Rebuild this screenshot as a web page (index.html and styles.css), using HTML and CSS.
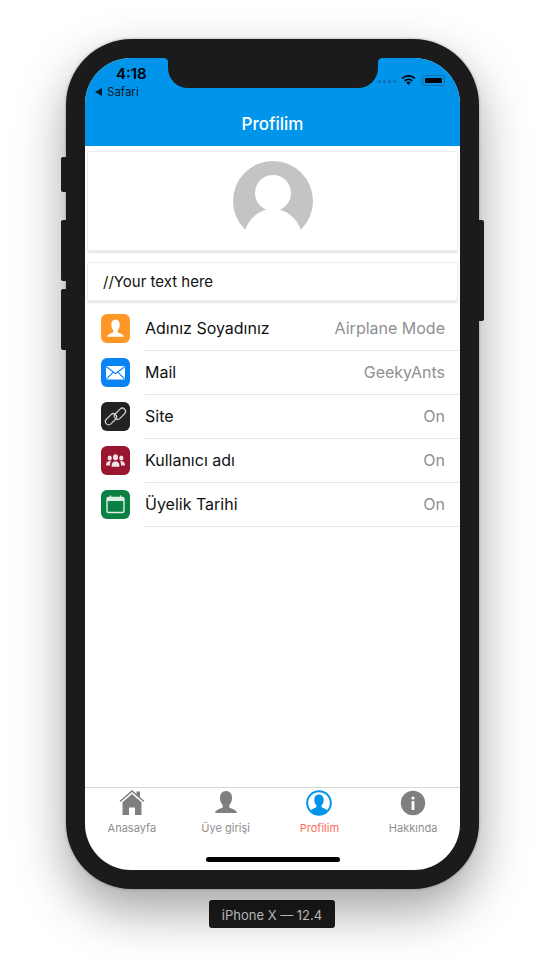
FILE: index.html
```html
<!DOCTYPE html>
<html lang="tr">
<head>
    <meta charset="UTF-8">
    <meta name="viewport" content="width=device-width, initial-scale=1.0">
    <title>Profilim</title>
    <link rel="stylesheet" href="styles.css">
</head>
<body>
    <div class="phone">
        <span class="side-btn side-mute"></span>
        <span class="side-btn side-up"></span>
        <span class="side-btn side-down"></span>
        <span class="side-btn side-power"></span>
        <div class="screen">
            <div class="notch"></div>
            <header class="top">
                <div class="status">
                    <div class="status-left">
                        <div class="time">4:18</div>
                        <div class="back"><span class="back-arrow"></span>Safari</div>
                    </div>
                    <div class="status-right">
                        <span class="dots"><i></i><i></i><i></i><i></i></span>
                        <svg class="wifi" width="15" height="12" viewBox="0 0 15 12">
                            <path d="M.6 3.7a10 10 0 0 1 13.8 0l-1.2 1.3a8.2 8.2 0 0 0-11.4 0z"/>
                            <path d="M3 6.2a6.6 6.6 0 0 1 9 0l-1.2 1.3a4.8 4.8 0 0 0-6.6 0z"/>
                            <path d="M5.3 8.6a3.2 3.2 0 0 1 4.4 0l-2.2 2.5z"/>
                        </svg>
                        <span class="battery"><span class="battery-fill"></span></span>
                    </div>
                </div>
                <h1 class="title">Profilim</h1>
            </header>

            <main class="content">
                <section class="card card-avatar">
                    <svg class="avatar" width="80" height="80" viewBox="0 0 80 80">
                        <circle cx="40" cy="40" r="40" fill="#c4c4c4"/>
                        <circle cx="40" cy="32" r="18" fill="#fff"/>
                        <path d="M12 69C17 56 27 48 40 48s23 8 28 21a40 40 0 0 1-6 11H18a40 40 0 0 1-6-11z" fill="#fff"/>
                    </svg>
                </section>
                <section class="card card-text">//Your text here</section>

                <ul class="list">
                    <li class="row">
                        <span class="ico ico-orange">
                            <svg width="29" height="29" viewBox="0 0 29 29"><path fill="#fff" d="M14.500 5.500c2.800 0 4.200 2.200 4.200 5.200 0 2.300-.9 4.300-2 5.500v2c1 .9 5.500 1.500 6.300 4.500H6c.8-3 5.300-3.600 6.300-4.500v-2c-1.100-1.200-2-3.200-2-5.500 0-3 1.400-5.200 4.200-5.200z"/></svg>
                        </span>
                        <div class="row-body"><span class="row-label">Adınız Soyadınız</span><span class="row-value">Airplane Mode</span></div>
                    </li>
                    <li class="row">
                        <span class="ico ico-blue">
                            <svg width="29" height="29" viewBox="0 0 29 29"><rect x="5" y="8" width="19" height="13.500" rx="1.500" fill="#fff"/><path d="M5.500 8.800l9 7 9-7M5.500 20.800l6.500-6.500M23.500 20.800L17 14.300" fill="none" stroke="#0a84f5" stroke-width="1.100"/></svg>
                        </span>
                        <div class="row-body"><span class="row-label">Mail</span><span class="row-value">GeekyAnts</span></div>
                    </li>
                    <li class="row">
                        <span class="ico ico-dark">
                            <svg width="29" height="29" viewBox="0 0 29 29" fill="none" stroke="#cfcfcf" stroke-width="1.200"><rect x="3.500" y="14" width="13" height="6.500" rx="3.250" transform="rotate(-45 10 17.250)"/><rect x="12.500" y="8.500" width="13" height="6.500" rx="3.250" transform="rotate(-45 19 11.750)"/></svg>
                        </span>
                        <div class="row-body"><span class="row-label">Site</span><span class="row-value">On</span></div>
                    </li>
                    <li class="row">
                        <span class="ico ico-red">
                            <svg width="29" height="29" viewBox="0 0 29 29" fill="#f3e4e7"><ellipse cx="14.500" cy="11.300" rx="2.500" ry="3"/><path d="M10.500 20.800c0-3.500 1.300-4.900 2.700-5.200h2.600c1.400.3 2.700 1.700 2.700 5.200z"/><ellipse cx="8.700" cy="12" rx="2.100" ry="2.600"/><path d="M5 19.500c0-2.800 1.200-4 2.500-4.300h2.600c-.8 1-1.100 2.400-1.200 4.300z"/><ellipse cx="20.300" cy="12" rx="2.100" ry="2.600"/><path d="M24 19.500c0-2.800-1.200-4-2.500-4.300h-2.600c.8 1 1.100 2.400 1.200 4.300z"/></svg>
                        </span>
                        <div class="row-body"><span class="row-label">Kullanıcı adı</span><span class="row-value">On</span></div>
                    </li>
                    <li class="row">
                        <span class="ico ico-green">
                            <svg width="29" height="29" viewBox="0 0 29 29"><rect x="6" y="7.500" width="17" height="15" rx="1.500" fill="none" stroke="#dcefe4" stroke-width="1.400"/><rect x="6" y="7.500" width="17" height="3.500" fill="#dcefe4"/><path d="M9.500 5.500v2.500M19.500 5.500v2.500" stroke="#dcefe4" stroke-width="1.400"/></svg>
                        </span>
                        <div class="row-body"><span class="row-label">Üyelik Tarihi</span><span class="row-value">On</span></div>
                    </li>
                </ul>
            </main>

            <nav class="tabs">
                <a class="tab">
                    <svg width="26" height="26" viewBox="0 0 26 26" fill="#7f7f7f"><path d="M13 0L.500 11l.9 1L13 2 24.600 12l.9-1-4.500-4V1.500h-3.500V4z"/><path d="M13 4L3.500 12.200V25H10v-7.500h6V25h6.500V12.200z"/></svg>
                    <span>Anasayfa</span>
                </a>
                <a class="tab">
                    <svg width="26" height="26" viewBox="0 0 26 26" fill="#7f7f7f"><path d="M13 1c4 0 6 3 6 7 0 3-1.200 5.500-2.700 7v2.500c1.300 1 7 2 7.700 5.500H2c.7-3.500 6.400-4.500 7.700-5.500V15C8.200 13.500 7 11 7 8c0-4 2-7 6-7z"/></svg>
                    <span>Üye girişi</span>
                </a>
                <a class="tab tab-active">
                    <svg width="26" height="26" viewBox="0 0 26 26"><circle cx="13" cy="13" r="11.800" fill="#fff" stroke="#0094ea" stroke-width="2"/><path fill="#0094ea" d="M13 4.500c3 0 4.700 2.300 4.700 5.300 0 2.300-.9 4.300-2.100 5.500v1.900c1 .8 4.500 1.400 5.900 3.400a10.800 10.800 0 0 1-17 0c1.400-2 4.900-2.600 5.900-3.400v-1.900c-1.200-1.200-2.100-3.200-2.100-5.500 0-3 1.700-5.300 4.700-5.300z"/></svg>
                    <span>Profilim</span>
                </a>
                <a class="tab">
                    <svg width="26" height="26" viewBox="0 0 26 26"><circle cx="13" cy="13" r="12.200" fill="#7f7f7f"/><circle cx="13" cy="8" r="1.600" fill="#fff"/><rect x="11.600" y="11" width="2.800" height="9" fill="#fff"/></svg>
                    <span>Hakkında</span>
                </a>
            </nav>
            <div class="home-bar"><span></span></div>
        </div>
    </div>
    <div class="device-label">iPhone X — 12.4</div>
</body>
</html>
```

FILE: styles.css
```css
* {
    box-sizing: border-box;
}
body {
    margin: 0;
    height: 964px;
    overflow: hidden;
    padding-top: 39px;
    background: #fff;
    font-family: Inter, "Noto Sans", sans-serif;
}
.phone {
    position: relative;
    width: 413px;
    height: 850px;
    margin-left: 66px;
    padding: 19px;
    background: #1b1b1b;
    border-radius: 66px;
    box-shadow: 0 22px 50px rgba(0, 0, 0, 0.36), 0 0 3px rgba(0, 0, 0, 0.3);
}
.side-btn {
    position: absolute;
    width: 5px;
    background: #1b1b1b;
}
.side-mute { left: -5px; top: 118px; height: 35px; border-radius: 2px 0 0 2px; }
.side-up { left: -5px; top: 181px; height: 61px; border-radius: 2px 0 0 2px; }
.side-down { left: -5px; top: 250px; height: 61px; border-radius: 2px 0 0 2px; }
.side-power { right: -5px; top: 181px; height: 101px; border-radius: 0 2px 2px 0; }

.screen {
    position: relative;
    display: flex;
    flex-direction: column;
    height: 812px;
    background: #fff;
    border-radius: 46px;
    overflow: hidden;
}
.notch {
    position: absolute;
    left: 83px;
    top: 0;
    width: 210px;
    height: 30px;
    background: #1b1b1b;
    border-radius: 0 0 20px 20px;
}
.notch::before,
.notch::after {
    content: "";
    position: absolute;
    top: 0;
    width: 5px;
    height: 5px;
}
.notch::before {
    left: -5px;
    background: radial-gradient(circle at 0 100%, transparent 5px, #1b1b1b 5.5px);
}
.notch::after {
    right: -5px;
    background: radial-gradient(circle at 100% 100%, transparent 5px, #1b1b1b 5.5px);
}

.top {
    height: 88px;
    background: #0094ea;
    flex-shrink: 0;
}
.status {
    display: flex;
    justify-content: space-between;
    height: 44px;
}
.status-left {
    padding: 7px 0 0 10px;
}
.time {
    margin-left: 21px;
    font-size: 15px;
    font-weight: 600;
    line-height: 17px;
    color: #000;
}
.back {
    display: flex;
    align-items: center;
    gap: 5px;
    margin-top: 3px;
    font-size: 11.5px;
    line-height: 14px;
    color: #0b1b28;
}
.back-arrow {
    width: 0;
    height: 0;
    border-top: 4px solid transparent;
    border-bottom: 4px solid transparent;
    border-right: 7px solid #0b1b28;
}
.status-right {
    display: flex;
    align-items: center;
    gap: 5px;
    height: 44px;
    margin-right: 15px;
}
.dots {
    display: flex;
    gap: 2px;
    margin-top: 2px;
}
.dots i {
    width: 3px;
    height: 3px;
    border-radius: 50%;
    background: #0a6fae;
}
.wifi {
    margin-right: 1px;
}
.battery {
    display: block;
    width: 23px;
    height: 11px;
    padding: 2px;
    border: 1px solid #0a6fae;
    border-radius: 3px;
}
.battery-fill {
    display: block;
    height: 100%;
    background: #000;
    border-radius: 1px;
}
.title {
    margin: 0;
    height: 44px;
    line-height: 44px;
    text-align: center;
    font-size: 17px;
    font-weight: 500;
    color: #fff;
}

.content {
    flex: 1;
    padding-top: 5px;
}
.card {
    margin: 0 2px;
    background: #fff;
    border: 1px solid #eee;
    border-radius: 2px;
    box-shadow: 0 2px 2px rgba(0, 0, 0, 0.1);
}
.card-avatar {
    display: flex;
    justify-content: center;
    height: 100px;
    padding-top: 9px;
}
.card-text {
    height: 39px;
    margin-top: 11px;
    padding-left: 15px;
    line-height: 38px;
    font-size: 15px;
    color: #111;
}

.list {
    list-style: none;
    margin: 6px 0 0;
    padding: 0;
}
.row {
    display: flex;
    align-items: center;
    height: 44px;
    padding-left: 16px;
}
.ico {
    display: block;
    flex-shrink: 0;
    width: 29px;
    height: 29px;
    margin-right: 15px;
    margin-bottom: 2px;
    border-radius: 6px;
}
.ico svg {
    display: block;
}
.ico-orange { background: #ff9726; }
.ico-blue { background: #0a84f5; }
.ico-dark { background: #222; }
.ico-red { background: #9a1530; }
.ico-green { background: #0b8043; }
.row-body {
    flex: 1;
    display: flex;
    justify-content: space-between;
    align-items: center;
    height: 44px;
    padding-right: 15px;
    padding-bottom: 2px;
    border-bottom: 1px solid #e6e6e6;
    font-size: 16px;
}
.row-label {
    color: #111;
}
.row-value {
    color: #8f8f93;
}

.tabs {
    display: flex;
    height: 70px;
    flex-shrink: 0;
    border-top: 1px solid #d8d8d8;
}
.tab {
    flex: 1;
    display: flex;
    flex-direction: column;
    align-items: center;
    padding-top: 2px;
    font-size: 11px;
    color: #8e8e8e;
}
.tab svg {
    display: block;
    margin-bottom: 5px;
}
.tab-active {
    color: #ff6b5e;
}
.home-bar {
    display: flex;
    justify-content: center;
    height: 13px;
    flex-shrink: 0;
}
.home-bar span {
    display: block;
    width: 134px;
    height: 5px;
    background: #000;
    border-radius: 3px;
}

.device-label {
    width: 126px;
    height: 28px;
    margin: 11px 0 0 209px;
    background: #1b1b1b;
    border-radius: 3px;
    color: #d8d8d8;
    font-size: 13px;
    line-height: 30px;
    text-align: center;
}
```
